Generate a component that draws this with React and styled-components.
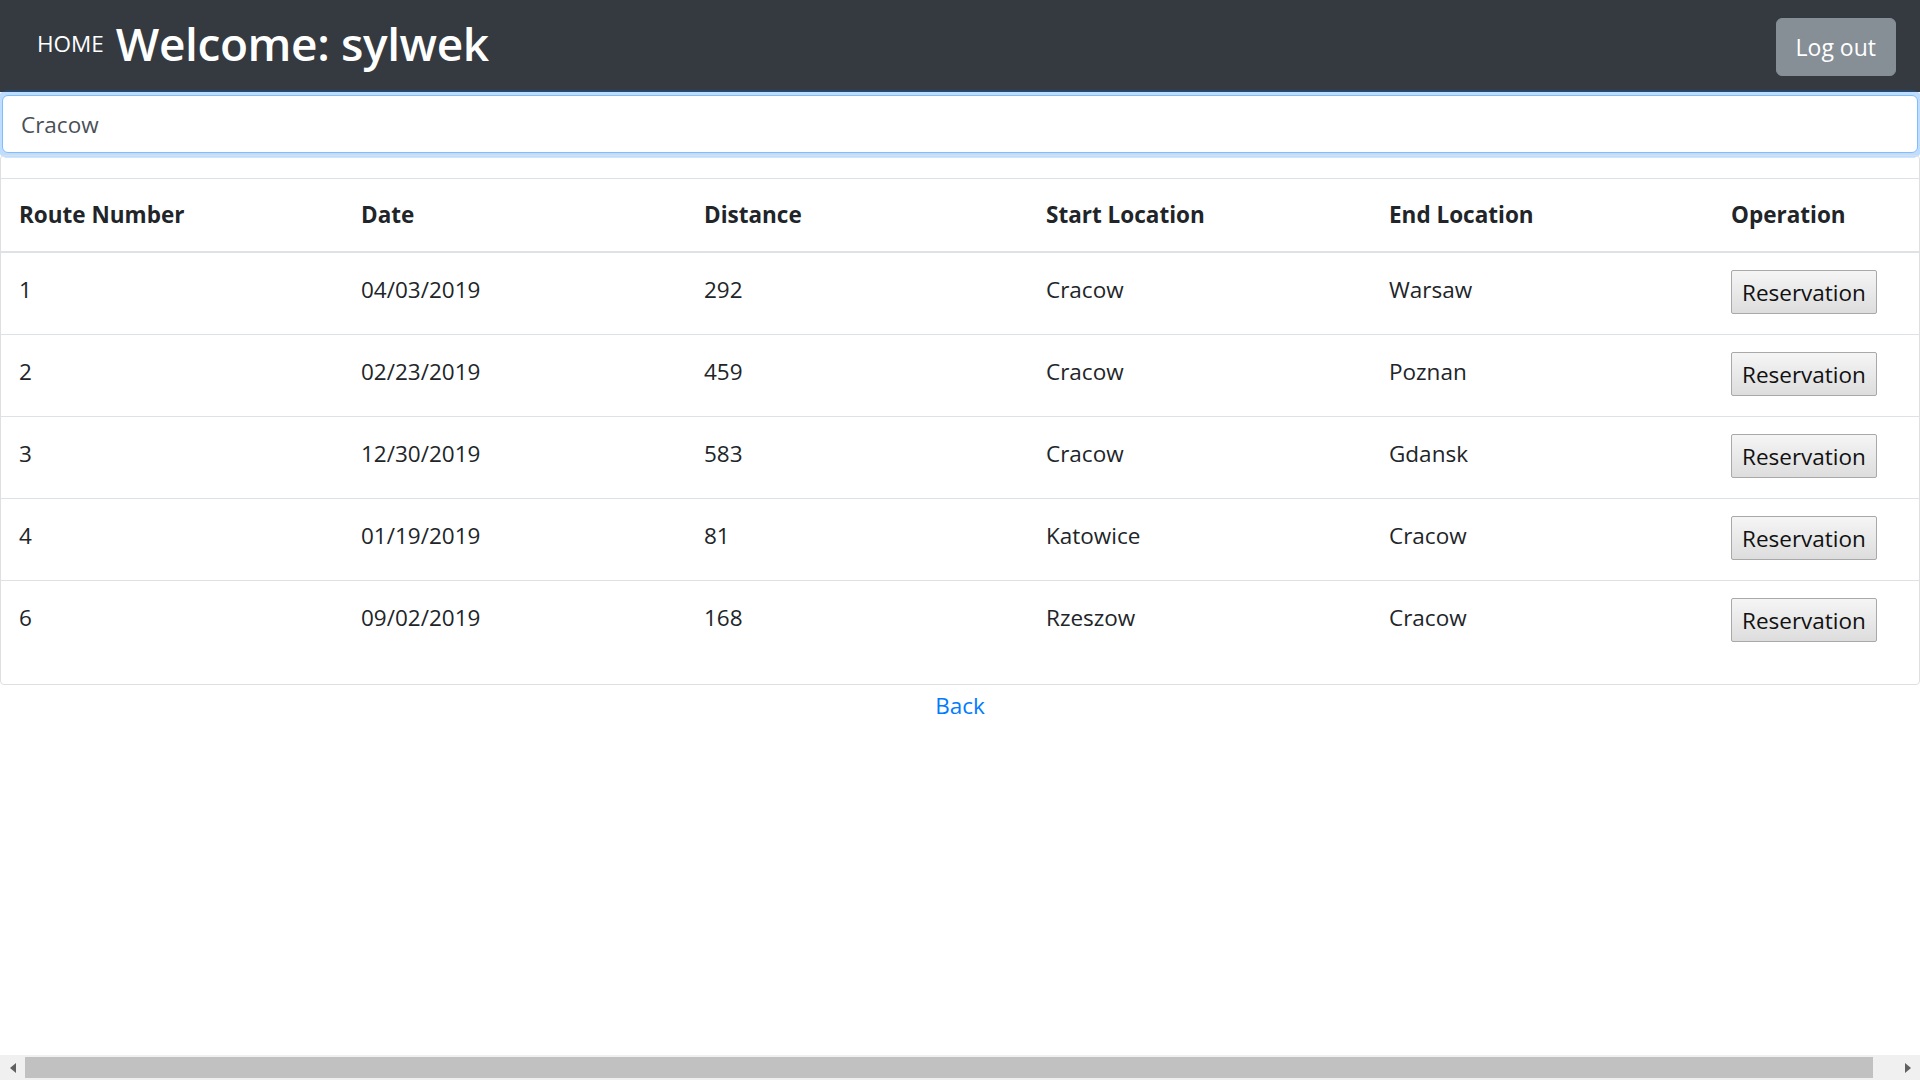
import React from 'react'
import styled, { createGlobalStyle } from 'styled-components'

const routes = [
  { id: 1, date: '04/03/2019', distance: 292, start: 'Cracow', end: 'Warsaw' },
  { id: 2, date: '02/23/2019', distance: 459, start: 'Cracow', end: 'Poznan' },
  { id: 3, date: '12/30/2019', distance: 583, start: 'Cracow', end: 'Gdansk' },
  { id: 4, date: '01/19/2019', distance: 81, start: 'Katowice', end: 'Cracow' },
  { id: 6, date: '09/02/2019', distance: 168, start: 'Rzeszow', end: 'Cracow' },
];

const columns = ['Route Number', 'Date', 'Distance', 'Start Location', 'End Location', 'Operation'];
const widths = [342, 343, 342, 343, 342];

const App = () => {
  return (
    <>
      <GlobalStyle />
      <Page>
        <Main>
          <Navbar>
            <Brand>HOME</Brand>
            <Title>Welcome: sylwek</Title>
            <LogoutButton>Log out</LogoutButton>
          </Navbar>

          <SearchInput defaultValue="Cracow" />

          <Card>
            <Table>
              <colgroup>
                {widths.map((w, i) => <col key={i} style={{ width: w }} />)}
                <col />
              </colgroup>
              <thead>
                <tr>
                  {columns.map(c => <Th key={c}>{c}</Th>)}
                </tr>
              </thead>
              <tbody>
                {routes.map(r => (
                  <Row key={r.id}>
                    <Td>{r.id}</Td>
                    <Td>{r.date}</Td>
                    <Td>{r.distance}</Td>
                    <Td>{r.start}</Td>
                    <Td>{r.end}</Td>
                    <Td>
                      <ReserveButton>Reservation</ReserveButton>
                    </Td>
                  </Row>
                ))}
              </tbody>
            </Table>
          </Card>

          <Footer>
            <BackLink href="#">Back</BackLink>
          </Footer>
        </Main>

        <Scrollbar>
          <ArrowButton>
            <svg width="6" height="10" viewBox="0 0 6 10"><polygon points="6,0 6,10 0,5" fill="#606060" /></svg>
          </ArrowButton>
          <Track>
            <Thumb style={{ width: `${(1920 / 1943) * 100}%` }} />
          </Track>
          <ArrowButton>
            <svg width="6" height="10" viewBox="0 0 6 10"><polygon points="0,0 0,10 6,5" fill="#606060" /></svg>
          </ArrowButton>
        </Scrollbar>
      </Page>
    </>
  )
};

const GlobalStyle = createGlobalStyle`
  html, body {
    margin: 0;
    padding: 0;
    overflow: hidden;
  }
  body {
    font-family: "Open Sans", "Liberation Sans", sans-serif;
    color: #212529;
    background: #fff;
  }
`;

const Page = styled.div`
  display: flex;
  flex-direction: column;
  height: 100vh;
`;

const Main = styled.main`
  flex: 1;
  overflow: hidden;
`;

const Navbar = styled.nav`
  display: flex;
  align-items: center;
  height: 92px;
  box-sizing: border-box;
  padding: 0 24px 0 37px;
  background: #343a40;
  color: #fff;
`;

const Brand = styled.span`
  font-size: 22.5px;
  line-height: 36px;
  margin-right: 12px;
  margin-bottom: 4px;
`;

const Title = styled.h2`
  margin: 0 0 6px;
  font-size: 46px;
  font-weight: 600;
  line-height: 54px;
  letter-spacing: -0.4px;
`;

const LogoutButton = styled.button`
  margin-left: auto;
  margin-top: 2px;
  font-family: inherit;
  font-size: 23px;
  line-height: 36px;
  padding: 10px 19px;
  color: #fff;
  background: #868e96;
  border: 1px solid #868e96;
  border-radius: 6px;
`;

const SearchInput = styled.input`
  display: block;
  box-sizing: border-box;
  width: calc(100% - 4px);
  height: 58px;
  margin: 3px 2px 0;
  padding: 9px 18px;
  font-family: inherit;
  font-size: 22.5px;
  color: #495057;
  background: #fff;
  border: 1px solid #80bdff;
  border-radius: 6px;
  outline: none;
  box-shadow: 0 0 0 4.8px rgba(0, 123, 255, 0.25);
`;

const Card = styled.div`
  margin-top: 2px;
  padding: 22px 0 22px;
  border: 1px solid #dfdfdf;
  border-radius: 4px;
`;

const Table = styled.table`
  width: 100%;
  table-layout: fixed;
  border-collapse: collapse;
  font-size: 22.5px;
  line-height: 36px;
`;

const Th = styled.th`
  text-align: left;
  font-weight: 700;
  padding: 18px;
  border-top: 1px solid #dee2e6;
  border-bottom: 2px solid #dee2e6;
  white-space: nowrap;
`;

const Row = styled.tr`
  & + & td {
    border-top: 1px solid #dee2e6;
  }
`;

const Td = styled.td`
  vertical-align: top;
  padding: 19px 18px 18px;
  white-space: nowrap;
`;

const ReserveButton = styled.button`
  display: block;
  height: 44px;
  margin-top: -2px;
  margin-bottom: 2px;
  padding: 0 10px;
  font-family: inherit;
  font-size: 22.5px;
  color: #111;
  background: linear-gradient(#f5f5f5, #dddddd);
  border: 1px solid #a9a9a9;
  border-radius: 2px;
`;

const Footer = styled.div`
  padding-top: 3px;
  text-align: center;
`;

const BackLink = styled.a`
  font-size: 22.5px;
  line-height: 36px;
  color: #007bff;
  text-decoration: none;
`;

const Scrollbar = styled.div`
  display: flex;
  flex: none;
  height: 25px;
  background: #f0f0f0;
`;

const ArrowButton = styled.div`
  display: flex;
  flex: none;
  align-items: center;
  justify-content: center;
  width: 25px;
`;

const Track = styled.div`
  flex: 1;
  display: flex;
  padding: 2px 0;
`;

const Thumb = styled.div`
  background: #c1c1c1;
`;

export default App;
